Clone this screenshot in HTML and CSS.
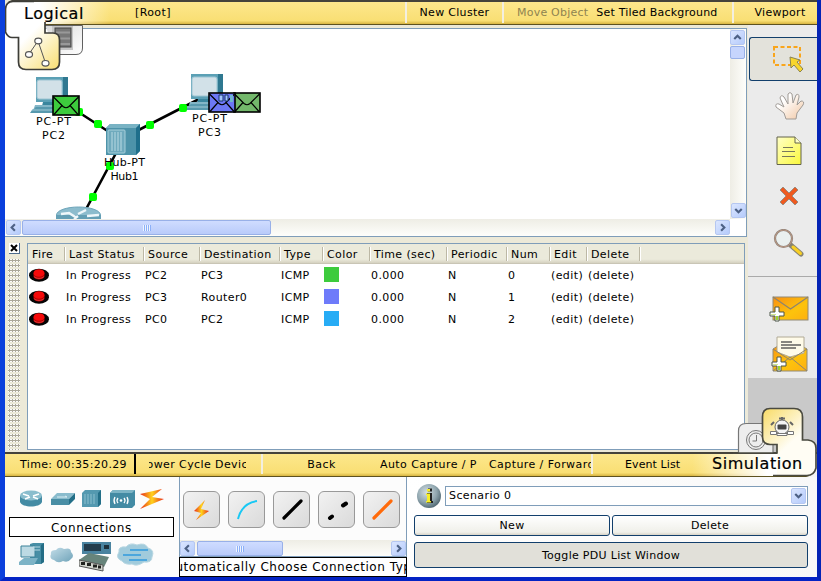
FILE: index.html
```html
<!DOCTYPE html>
<html lang="en">
<head>
<meta charset="utf-8">
<title>Network Simulator</title>
<link rel="stylesheet" href="styles.css">
</head>
<body>
<svg width="0" height="0" class="defs">
  <defs>
    <linearGradient id="gold" gradientUnits="userSpaceOnUse" x1="28" y1="36" x2="58" y2="66"><stop offset="0" stop-color="#fff"/><stop offset="1" stop-color="#f9e07a"/></linearGradient>
    <linearGradient id="goldr" gradientUnits="userSpaceOnUse" x1="60" y1="36" x2="32" y2="6"><stop offset="0" stop-color="#fffdf4"/><stop offset="1" stop-color="#f9de70"/></linearGradient>
    <linearGradient id="silver" x1="0" y1="0" x2="1" y2="1"><stop offset="0" stop-color="#d8d8d8"/><stop offset="1" stop-color="#fff"/></linearGradient>
    <linearGradient id="env" x1="0" y1="0" x2="1" y2="1"><stop offset="0" stop-color="#f98f10"/><stop offset=".6" stop-color="#fdc30c"/><stop offset="1" stop-color="#fdb010"/></linearGradient>
    <linearGradient id="bolt" x1="0" y1="0" x2="1" y2="0"><stop offset="0" stop-color="#e8281a"/><stop offset=".5" stop-color="#ffd21c"/><stop offset="1" stop-color="#e8281a"/></linearGradient>
    <linearGradient id="hand" x1="0" y1="0" x2="1" y2="1"><stop offset=".3" stop-color="#fff"/><stop offset="1" stop-color="#f1c6a2"/></linearGradient>
    <linearGradient id="note" x1="0" y1="0" x2="1" y2="1"><stop offset="0" stop-color="#ffffc8"/><stop offset="1" stop-color="#faf83c"/></linearGradient>
    <radialGradient id="info" cx=".4" cy=".35" r=".7"><stop offset="0" stop-color="#d4dfe3"/><stop offset=".6" stop-color="#8fa5ae"/><stop offset="1" stop-color="#4b626c"/></radialGradient>
    <linearGradient id="cloud" x1="0" y1="0" x2="1" y2="1"><stop offset="0" stop-color="#c3dde8"/><stop offset="1" stop-color="#6fa3b9"/></linearGradient>
    <symbol id="pc" viewBox="0 0 44 40">
      <path d="M6 1H38V26H6Z" fill="#5ba0b5"/><path d="M33 1h5v25l-5 2z" fill="#2f7890"/>
      <rect x="7" y="4" width="25" height="19" rx="2" fill="#d2e1e8" stroke="#9cc4d2"/>
      <path d="M13 26h20l-2 4H12z" fill="#3a869e"/><path d="M5 29h27l4 3H4z" fill="#83b6c7"/><path d="M2 34l4-3h29l4 6H0z" fill="#5799ae"/><path d="M2 34h33" stroke="#a3cad6"/>
    </symbol>
    <symbol id="mail" viewBox="0 0 28 21">
      <rect x="1" y="1" width="26" height="19" stroke="#000" stroke-width="1.6"/>
      <path d="M1.500 2L11 11.500Q14 14 17 11.500L26.500 2M2 19.500L10 10.500M26 19.500L18 10.500" fill="none" stroke="#000" stroke-width="1.2"/>
    </symbol>
    <symbol id="left" viewBox="0 0 14 14"><path d="M8.500 3.500L5 7l3.500 3.500" fill="none" stroke="#4d6185" stroke-width="2.300"/></symbol>
    <symbol id="fire" viewBox="0 0 20 14"><ellipse cx="10" cy="7.200" rx="10" ry="6.500" fill="#050505"/><path d="M4.500 5v3.500c1 4 10 4 11 0V5z" fill="#b30000"/><ellipse cx="10" cy="5" rx="5.500" ry="3.800" fill="#f50a0a"/><path d="M5 8.500c2 2.500 8 2.500 10 0" fill="none" stroke="#ff6060" stroke-width=".6"/></symbol>
    <symbol id="plus" viewBox="0 0 16 16"><path d="M6 1h4v5h5v4h-5v5H6v-5H1V6h5z" fill="#fff" stroke="#4d5748" stroke-width="1"/><path d="M7 10h2v4H7z" fill="#9bd330"/><path d="M2 8h5v1H2z" fill="#cfe88e"/></symbol>
  </defs>
</svg>
<div class="window">
  <header class="bar top">
    <span class="location">[Root]</span>
    <span class="cell w97">New Cluster</span>
    <span class="cell plain w230"><i>Move Object</i><span>Set Tiled Background</span></span>
    <span class="cell w85">Viewport</span>
    <div class="logical-tab">
      <svg width="90" height="72" viewBox="5 0 90 72">
        <path d="M45 25.500H82.500V48Q82.500 54.500 76 54.500H58" fill="url(#silver)" stroke="#606060"/>
        <rect x="52" y="26" width="21" height="24" fill="#c4c4c4"/><rect x="55" y="28" width="16" height="19" fill="#777" stroke="#444"/><path d="M56 32.500h14M56 38.500h14M56 44h14" stroke="#999" stroke-width="2"/>
        <path d="M5 0H12Q5 2 5 9Z" fill="#ece9d8"/>
        <path d="M45 22V33H53Q59.500 33 59.500 40V62Q59.500 69.500 52 69.500H26Q18.500 69.500 18.500 62V37.500H12Q8 37.500 5 32V9Q6 1.500 13 1.500H30V22Z" fill="url(#gold)"/>
        <path d="M45 22V33H53Q59.500 33 59.500 40V62Q59.500 69.500 52 69.500H26Q18.500 69.500 18.500 62V37.500H12Q8 37.500 5.500 32V9Q6 1.500 13 1.500H34" fill="none" stroke="#3d3d38" stroke-width="1.700"/>
        <path d="M29 54L38 41L45.500 63" fill="none" stroke="#555"/>
        <g fill="#fff" stroke="#555" stroke-width="1.200"><ellipse cx="38.300" cy="41" rx="3.500" ry="2.800"/><ellipse cx="29" cy="54.500" rx="3.500" ry="2.800"/><ellipse cx="45.500" cy="63.300" rx="3.500" ry="2.800"/></g>
      </svg>
      <span class="tab-title">Logical</span>
    </div>
  </header>

  <div class="middle">
    <div class="left-side">
      <section class="workspace">
        <div class="canvas">
          <svg width="724" height="190" viewBox="6 29 724 190">
            <path d="M66 104L123 141M123 138L207 95M123 140L84 213" stroke="#000" stroke-width="2.600"/>
            <use href="#pc" x="30" y="76" width="44" height="40"/>
            <use href="#pc" x="185" y="73" width="44" height="40"/>
            <g fill="#0f0"><rect x="75" y="108" width="8" height="8" rx="2"/></g>
            <use href="#mail" x="52" y="95" width="28" height="21" fill="#3dcc3d"/>
            <use href="#mail" x="233" y="92" width="28" height="21" fill="#73b86b"/>
            <use href="#mail" x="208" y="92" width="28" height="21" fill="#6c78f5"/>
            <path d="M219 95h4v6h-4zM225 95h3v6h-3z" fill="#a4c6ff" stroke="#17346b"/><path d="M230 95h3v7h-3z" fill="#71b5d0"/>
            <path d="M106 128L110 124H140V151L136 155H106Z" fill="#4d93a9"/><path d="M106 128L110 124H140L136 128Z" fill="#79b3c4"/><path d="M136 128L140 124V151L136 155Z" fill="#1f6f8b"/>
            <rect x="108" y="130" width="17" height="23" rx="1" fill="#6faabd" stroke="#a7cfda"/><path d="M112 132v19M115 132v19M118 132v19M121 132v19" stroke="#b9dae3"/>
            <ellipse cx="78.500" cy="215" rx="22" ry="8" fill="#8cbccd" stroke="#6da5ba"/><path d="M56 215v9h45v-9" fill="#639fb5"/>
            <path d="M61 214l8-1 8 5M86 210l-8 4M99 215l-12 1M74 219l4-3" fill="none" stroke="#eef7fa" stroke-width="2.500"/>
            <g fill="#0f0"><rect x="94" y="120" width="8" height="8" rx="2"/><rect x="146" y="121" width="8" height="8" rx="2"/><rect x="179" y="104" width="8" height="8" rx="2"/><rect x="106" y="162" width="8" height="8" rx="2"/><rect x="89" y="193" width="8" height="8" rx="2"/></g>
            <g class="node-labels"><text x="53.500" y="125" textLength="35">PC-PT</text><text x="53.500" y="139" textLength="23">PC2</text><text x="209.500" y="122" textLength="35">PC-PT</text><text x="209.500" y="136" textLength="23">PC3</text><text x="124.500" y="166" textLength="41">Hub-PT</text><text x="124.500" y="180" textLength="28">Hub1</text></g>
          </svg>
        </div>
        <div class="vscroll"><b class="sb"><svg class="up"><use href="#left"/></svg></b><b class="vthumb"></b><b class="sb end"><svg class="down"><use href="#left"/></svg></b></div>
        <div class="hscroll wide"><b class="sb"><svg><use href="#left"/></svg></b><b class="hthumb w248"><u></u></b><b class="sb end"><svg class="right"><use href="#left"/></svg></b></div>
      </section>
      <section class="pdu">
        <div class="dock"><span class="close"><svg width="8" height="8"><path d="M1 1l6 6M7 1L1 7" stroke="#000" stroke-width="2"/></svg></span><span class="grip"></span></div>
        <div class="table">
          <div class="row head"><span>Fire</span><span>Last Status</span><span>Source</span><span>Destination</span><span>Type</span><span>Color</span><span>Time (sec)</span><span>Periodic</span><span>Num</span><span>Edit</span><span>Delete</span><span></span></div>
          <div class="row"><span><svg class="fire"><use href="#fire"/></svg></span><span>In Progress</span><span>PC2</span><span>PC3</span><span>ICMP</span><span><b class="swatch green"></b></span><span>0.000</span><span>N</span><span>0</span><span>(edit)</span><span>(delete)</span></div>
          <div class="row"><span><svg class="fire"><use href="#fire"/></svg></span><span>In Progress</span><span>PC3</span><span>Router0</span><span>ICMP</span><span><b class="swatch violet"></b></span><span>0.000</span><span>N</span><span>1</span><span>(edit)</span><span>(delete)</span></div>
          <div class="row"><span><svg class="fire"><use href="#fire"/></svg></span><span>In Progress</span><span>PC0</span><span>PC2</span><span>ICMP</span><span><b class="swatch blue"></b></span><span>0.000</span><span>N</span><span>2</span><span>(edit)</span><span>(delete)</span></div>
        </div>
      </section>
    </div>
    <aside class="tools">
      <div class="tool selected"><svg width="34" height="30"><rect x="2" y="3" width="26" height="18" fill="none" stroke="#f9a51b" stroke-width="2" stroke-dasharray="4 2.500"/><path d="M18 13l10 3-3 2 6 7-3 3-6-7-3 3z" fill="#f8d62c" stroke="#8b8350"/></svg></div>
      <div class="tool t2"><svg width="32" height="30"><path d="M12 28L10 22L2 16Q1 12 5 13L10 16L6 7Q7 3 10 6L14 13L14 3Q16 0 18 3L19 12L22 4Q25 2 25 6L23 14L27 10Q31 10 29 14L23 22L22 28Z" fill="url(#hand)" stroke="#a09b96"/></svg></div>
      <div class="tool t3"><svg width="26" height="30"><path d="M1 1H19L25 7V28.500H1Z" fill="url(#note)" stroke="#63634d"/><path d="M19 1v6h6" fill="#ffffc8" stroke="#63634d"/><path d="M7 11.500h10M6 15.500h13M6 20.500h13" stroke="#77775c"/></svg></div>
      <div class="tool t4"><svg width="20" height="20"><path d="M1 4L4 1L10 7L16 1L19 4L13 10L19 16L16 19L10 13L4 19L1 16L7 10Z" fill="#ee5a20" stroke="#9c8c80"/></svg></div>
      <div class="tool t5"><svg width="34" height="30"><path d="M17.500 16L28 25" stroke="#888470" stroke-width="5" stroke-linecap="round"/><path d="M20 18L27.500 24.500" stroke="#f8cf25" stroke-width="3" stroke-linecap="round"/><circle cx="10.500" cy="9.500" r="8.500" fill="#eaf0ef" stroke="#8d8178" stroke-width="2.200"/><circle cx="10.500" cy="9.500" r="8.500" fill="none" stroke="#c9a086" stroke-width=".8"/></svg></div>
      <div class="tool t6"><svg width="40" height="28"><rect x="4" y="2" width="35" height="23" fill="url(#env)" stroke="#928a77"/><path d="M4 2L21.500 14L39 2" fill="none" stroke="#8d8470" stroke-width="1.200"/><use href="#plus" x="0" y="11" width="16" height="16"/></svg></div>
      <div class="tool t7"><svg width="40" height="38"><path d="M3 13L19 3L37 13V35H3Z" fill="url(#env)" stroke="#928a77"/><path d="M7 1H34V17L20 21L7 16Z" fill="#fffbe9" stroke="#b1aa96"/><path d="M11 6h11M11 9h20M11 12h15" stroke="#888680" stroke-width="2"/><path d="M3 13L20 24L37 13M3 35L20 21L37 35" fill="none" stroke="#8d8470"/><use href="#plus" x="1" y="20" width="16" height="16"/></svg></div>
    </aside>
  </div>

  <div class="bar controls">
    <span class="time">Time: 00:35:20.29</span>
    <span class="clip c1"><span>Power Cycle Device</span></span>
    <span class="back">Back</span>
    <span class="clip c2">Auto Capture / Play</span>
    <span class="clip c3">Capture / Forward</span>
    <span class="event">Event List</span>
    <div class="sim-tab">
      <svg width="84" height="72">
        <path d="M5.500 48V26Q5.500 18.500 13 18.500H40V48" fill="#eee" stroke="#777" stroke-width="1.200"/>
        <g fill="none" stroke="#777"><circle cx="23" cy="35" r="9.500"/><circle cx="23" cy="35" r="7"/><path d="M23.500 30v6h-4"/></g>
        <path d="M44 50V40H37Q29.500 40 29.500 33V12Q29.500 3.500 37 3.500H61Q69.500 3.500 69.500 12V35H75Q83 36 83 43V64Q82 70.500 75 70.500H44Z" fill="url(#goldr)"/>
        <path d="M84 62V72H73Q82 70 84 62Z" fill="#f4f4f4"/>
        <path d="M0 48H44V39.500H37Q29.500 39 29.500 32V12Q29.500 3.500 37 3.500H61Q69.500 3.500 69.500 12V35H75Q83 36 83 43V63Q81 70.500 74 70.500H40" fill="none" stroke="#4a4a40" stroke-width="1.700"/>
        <path d="M46 13.500h6M49 12v3M38 20l3-3M60 20l-3-3" stroke="#666" stroke-width="2"/><circle cx="49" cy="22" r="7" fill="#f4f4f4" stroke="#666"/><rect x="44.500" y="19.500" width="9" height="5" rx="1" fill="#444"/><path d="M37.500 26.500h6v3h-6zM44 28.500h10v2H44zM54.500 26.500h6v3h-6z" fill="#fff" stroke="#777"/>
      </svg>
      <span class="tab-title">Simulation</span>
    </div>
  </div>

  <footer class="bottom">
    <section class="devices">
      <div class="icons first">
        <svg width="23" height="19"><path d="M0 6v6c2 6 20 6 22 0V6z" fill="#438ba4"/><ellipse cx="11" cy="5.500" rx="11" ry="5" fill="#8abdcd"/><path d="M3 4l6 2M19 4l-6 2M5 9l5-2M18 9l-5-2" stroke="#fff" stroke-width="1.500"/></svg>
        <svg width="24" height="15"><path d="M0 6L6 0H24L18 6Z" fill="#8abccd"/><path d="M0 6H18V12H0Z" fill="#498ea5"/><path d="M18 6L24 0V6L18 12Z" fill="#236f88"/><path d="M6 4h10l-2-1" fill="none" stroke="#d8edf3"/></svg>
        <svg width="20" height="18"><path d="M0 3L3 0H19V14L16 17H0Z" fill="#5499b0"/><path d="M16 3L19 0V14L16 17Z" fill="#236f88"/><path d="M3 4v10M6 4v10M9 4v10M12 4v10" stroke="#8cc0cf"/></svg>
        <svg width="26" height="19"><path d="M0 3L3 0H25V15L22 18H0Z" fill="#438ba4"/><path d="M0 3L3 0H25L22 3Z" fill="#7db4c5"/><g fill="none" stroke="#fff" stroke-width="1.300"><path d="M5 7q-2 3.500 0 7M8 8q-2 2.500 0 5M17 7q2 3.500 0 7M14 8q2 2.500 0 5"/></g><circle cx="11" cy="10.500" r="1.300" fill="#fff"/></svg>
        <svg width="25" height="21"><path d="M22 0L0 5L10 10L0 20L24 10L12 8Z" fill="url(#bolt)"/></svg>
      </div>
      <div class="caption">Connections</div>
      <div class="icons second">
        <svg width="26" height="23"><path d="M11 1L14 0H25V19L22 21H11Z" fill="#478ea5"/><path d="M22 2L25 0V19L22 21Z" fill="#246d85"/><path d="M2 3H16V14H2Z" fill="#bddae4" stroke="#3b8199"/><path d="M0 19L5 15H19L15 22H0Z" fill="#7db3c6"/><path d="M14 4h7M14 7h7" stroke="#b7d8e2"/></svg>
        <svg width="24" height="16"><path d="M4 13Q-1 12 1 7Q0 3 6 3Q9-1 14 2Q21 0 21 5Q25 9 21 12Q18 16 13 14Q8 17 4 13Z" fill="url(#cloud)"/></svg>
        <svg width="33" height="30"><path d="M3 0H32V12H3Z" fill="#4a83a0"/><path d="M5 2h17v7H5z" fill="#233c4c"/><path d="M25 3h5v4h-5z" fill="#1d303c"/><path d="M0 18L10 11L30 15L25 25L1 20Z" fill="#67847b"/><path d="M0 18L24 23V29L0 24Z" fill="#d1d4cd" stroke="#555"/><path d="M2 20h4v3H2zM8 21h4v3H8zM14 22.500h4v3h-4zM19 23.500h3v3h-3z" fill="#20221f"/></svg>
        <svg width="37" height="23"><path d="M5 18Q-2 15 2 9Q1 3 9 4Q13-1 20 2Q28-1 31 5Q38 7 35 14Q35 20 27 19Q20 24 15 21Q8 22 5 18Z" fill="#a1cbdc" stroke="#b9d7e2"/><path d="M13 7h18M6 12h18M12 17h18" stroke="#4ca6dd" stroke-width="2"/></svg>
      </div>
    </section>
    <section class="connections">
      <div class="types">
        <span><svg width="36" height="36"><path d="M21 8L10 19L17 21L12 28L25 19L17 17Z" fill="url(#bolt)"/></svg></span>
        <span><svg width="36" height="36"><path d="M9 27Q13 11 28 9" fill="none" stroke="#19c8f4" stroke-width="2"/></svg></span>
        <span><svg width="36" height="36"><path d="M10 26L27 9" stroke="#000" stroke-width="3.200" stroke-linecap="round"/></svg></span>
        <span><svg width="36" height="36"><path d="M11 26L13 24.500M24 13.500L27 11.500" stroke="#000" stroke-width="4" stroke-linecap="round"/></svg></span>
        <span><svg width="36" height="36"><path d="M10 26L27 9" stroke="#ff6a0b" stroke-width="3.200" stroke-linecap="round"/></svg></span>
      </div>
      <div class="hscroll mini"><b class="sb"><svg><use href="#left"/></svg></b><b class="hthumb w84"><u></u></b><b class="sb end"><svg class="right"><use href="#left"/></svg></b></div>
      <div class="hint"><span>Automatically Choose Connection Type</span></div>
    </section>
    <section class="scenario">
      <div class="pick"><svg width="26" height="26"><circle cx="13" cy="13" r="12" fill="url(#info)"/><path d="M12 5.500h4v3h-4zM11 10h5v8h1v2h-6v-2h2v-6h-2z" fill="#222"/><path d="M11 6h3v2.500h-3zM10 10.500H14V18h1v1.500H10V18h1v-6h-1z" fill="#f6ee28"/></svg><div class="select"><span>Scenario 0</span><b class="sb"><svg class="down"><use href="#left"/></svg></b></div></div>
      <div class="pair"><button>New</button><button>Delete</button></div>
      <button class="toggle">Toggle PDU List Window</button>
    </section>
  </footer>
</div>
</body>
</html>
```

FILE: styles.css
```css
* { box-sizing: border-box; }
body { margin: 0; width: 821px; height: 581px; overflow: hidden; font: 11px/14px "DejaVu Sans", sans-serif; color: #000; letter-spacing: .4px; }
.defs { position: absolute; }
svg { display: block; flex: none; }
.window { width: 821px; height: 581px; display: flex; flex-direction: column; background: #ece9d8; border: solid; border-width: 0 4px 4px 5px; border-color: #0831c8 #0423b5 #0423c4 #0a3fdc; }
.bar { position: relative; display: flex; align-items: stretch; flex: none; height: 25px; border-top: 2px solid #45433b; border-bottom: 1px solid #5d5220; background: linear-gradient(#fde78c, #f9df74 85%, #d8b541); white-space: nowrap; line-height: 22px; }
.top { background: linear-gradient(90deg, #fff 35px, rgba(255, 255, 255, 0) 105px), linear-gradient(#fde78c, #f9df74 85%, #d8b541); }
.location { flex: 1; padding-left: 130px; letter-spacing: .4px; }
.cell { border-left: 2px solid #f3efe0; text-align: center; height: 21px; letter-spacing: .3px; }
.w97 { width: 97px; }
.w230 { width: 230px; display: flex; gap: 8px; padding-left: 13px; letter-spacing: .22px; }
.w230 i { font-style: normal; color: #8f8450; }
.w85 { width: 85px; padding-left: 9px; }
.logical-tab { position: absolute; left: 0; top: -2px; z-index: 3; width: 90px; height: 72px; }
.tab-title { position: absolute; left: 19px; top: 4px; font-size: 16px; line-height: 20px; letter-spacing: .55px; -webkit-text-stroke: .2px #000; }
.middle { height: 427px; display: flex; flex: none; }
.left-side { width: 743px; padding-top: 3px; display: flex; flex-direction: column; }
.workspace { height: 209px; width: 742px; border: 1px solid #7f9db9; border-left: 0; background: #fff; display: grid; grid-template: 190px 17px / 725px 16px; }
.canvas { overflow: hidden; padding-left: 1px; }
.node-labels { text-anchor: middle; font-size: 11px; letter-spacing: 0; }
.vscroll { display: flex; flex-direction: column; background: linear-gradient(90deg, #eeede5, #fefefb); padding: 1px 0; }
.hscroll { height: 17px; display: flex; background: linear-gradient(#eeede5, #fefefb); padding: 1px 0; }
.wide { padding-left: 1px; }
.sb { width: 15px; height: 15px; flex: none; border: 1px solid #b5c7f1; border-radius: 2px; background: linear-gradient(135deg, #dbe6ff, #b5cbfb); }
.sb svg { width: 13px; height: 13px; }
.up { transform: rotate(90deg); }
.down { transform: rotate(-90deg); }
.right { transform: rotate(180deg); }
.end { margin: auto 0 0 auto; }
.vthumb { width: 15px; height: 13px; margin-top: 1px; border: 1px solid #98b0e8; border-radius: 2px; background: #c6d5fd; }
.hthumb { height: 15px; margin-left: 2px; display: flex; align-items: center; justify-content: center; border: 1px solid #98b0e8; border-radius: 2px; background: linear-gradient(#cfdcff, #b9cbfa); }
.hthumb u { width: 8px; height: 6px; background: repeating-linear-gradient(90deg, #eef4fe 0 1px, #8cb0f8 1px 2px); }
.w248 { width: 249px; margin-left: 1px; }
.w84 { width: 86px; }
.pdu { flex: 1; display: flex; padding: 6px 3px 3px 3px; }
.dock { width: 19px; display: flex; flex-direction: column; }
.close { width: 11px; height: 11px; background: #fff; border: solid #4d6a8c; border-width: 0 1px 1px 0; display: flex; align-items: center; justify-content: center; margin-left: 1px; }
.grip { flex: 1; width: 12px; margin: 5px 0 0 0; background: radial-gradient(circle at 1.500px 1.500px, #aca899 0 1px, #fff 1.200px 1.400px, transparent 1.600px) 0 0 / 3px 5px; }
.table { width: 718px; height: 207px; border: 1px solid #7f9db9; background: #fff; }
.row { display: grid; grid-template-columns: 36px 79px 56px 80px 43px 47px 77px 60px 43px 37px 53px 1fr; height: 22px; line-height: 23px; white-space: nowrap; }
.row > span { padding-left: 2px; }
.row > span:first-child { padding-left: 1px; }
.head { height: 20px; line-height: 20px; background: linear-gradient(#ebeadb 80%, #d5d1c0); border-bottom: 1px solid #c9c5b5; }
.head > span { padding-left: 4px; height: 14px; margin-top: 3px; line-height: 15px; border-left: 1px solid #bcb8a5; box-shadow: inset 1px 0 #fff; }
.head > span:first-child { border: 0; padding-left: 4px; box-shadow: none; }
.fire { width: 20px; height: 14px; margin-top: 4px; }
.swatch { display: block; width: 15px; height: 15px; margin-top: 3px; }
.green { background: #3dcb3d; }
.violet { background: #6e7bfa; }
.blue { background: #27acf5; }
.tools { width: 69px; display: flex; flex-direction: column; background: linear-gradient(#ebebeb 353px, #c9c9c9 353px); }
.tool { flex: none; display: flex; }
.selected { margin: 12px 0 0 1px; height: 44px; border: 1px solid #123f6c; border-right: 0; border-radius: 3px 0 0 3px; background: #e3e2db; padding: 6px 0 0 22px; }
.t2 { margin: 10px 0 0 26px; height: 46px; }
.t3 { margin: -1px 0 0 28px; height: 51px; }
.t4 { margin: -1px 0 0 31px; height: 43px; }
.t5 { margin: 0 0 0 25px; height: 47px; }
.t6 { border-top: 1px solid #aaa; padding: 18px 0 0 21px; height: 60px; }
.t7 { padding-left: 22px; }
.controls { z-index: 2; line-height: 21px; background: linear-gradient(270deg, #fff 50px, rgba(255, 255, 255, 0) 125px), linear-gradient(#fde78c, #f9df74 85%, #d8b541); }
.controls > span { height: 20px; }
.time { width: 131px; border-right: 2px solid #000; padding-left: 15px; letter-spacing: .35px; }
.clip { overflow: hidden; }
.c1 { width: 97px; margin: 0 15px 0 13px; display: flex; justify-content: center; letter-spacing: .4px; }
.back { width: 119px; border-left: 2px solid #f3efe0; text-align: center; }
.c2 { width: 97px; letter-spacing: .42px; }
.c3 { width: 102px; margin-left: 12px; letter-spacing: .42px; }
.event { border-left: 2px solid #f3efe0; padding-left: 32px; letter-spacing: .1px; }
.sim-tab { position: absolute; right: 0; top: -49px; width: 84px; height: 72px; }
.sim-tab .tab-title { left: -21px; top: 49px; }
.bottom { height: 100px; display: flex; background: #fcfcfc; }
.devices { width: 174px; padding: 12px 5px 0 4px; }
.icons { display: flex; }
.icons.first { height: 28px; gap: 8px; padding-left: 11px; align-items: flex-start; }
.icons.first svg:nth-child(2) { margin-top: 4px; }
.icons.first svg:nth-child(1), .icons.first svg:nth-child(3), .icons.first svg:nth-child(4) { margin-top: 1px; }
.icons.first svg:nth-child(3) { margin-left: -1px; }
.icons.first svg:nth-child(5) { margin-left: -4px; margin-top: 0; }
.caption { height: 20px; width: 165px; border: 1px solid #000; background: #fff; text-align: center; line-height: 20px; font-size: 12px; letter-spacing: .6px; }
.icons.second { padding: 6px 0 0 10px; gap: 5px; }
.icons.second svg:nth-child(2) { margin-top: 4px; }
.icons.second svg:nth-child(3) { margin-top: -1px; }
.connections { width: 228px; border: 1px solid #7f9db9; border-bottom: 0; border-top: 0; display: flex; flex-direction: column; }
.types { height: 63px; display: flex; gap: 8px; padding: 14px 0 0 3px; }
.types span { width: 37px; height: 37px; flex: none; border: 1px solid #999; border-radius: 6px; background: linear-gradient(135deg, #f2f2f2, #dadada); }
.mini { border-bottom: 1px solid #7f9db9; }
.hint { width: 228px; height: 20px; margin-left: -1px; border: 1px solid #000; overflow: hidden; display: flex; justify-content: center; align-items: center; font-size: 12px; letter-spacing: .52px; white-space: nowrap; background: #fff; }
.scenario { flex: 1; display: flex; flex-direction: column; padding: 6px 9px 0 7px; background: linear-gradient(90deg, #fff, #f8f8f8); }
.pick { display: flex; height: 26px; gap: 3px; padding-left: 2px; }
.select { flex: 1; display: flex; align-items: center; justify-content: space-between; height: 20px; margin: 3px 0 0; border: 1px solid #7f9db9; padding: 0 1px 0 3px; background: #fff; }
.select .sb { height: 16px; }
.pair { display: flex; gap: 2px; margin: 6px 0 6px; }
button { height: 21px; flex: 1; font: inherit; letter-spacing: .3px; line-height: 17px; color: #000; border: 1px solid #123f6c; border-radius: 3px; background: linear-gradient(#fff, #f0f0ea 85%, #d8d4c8); padding: 0; }
.toggle { flex: none; height: 26px; background: #e1e0d9; }
```
